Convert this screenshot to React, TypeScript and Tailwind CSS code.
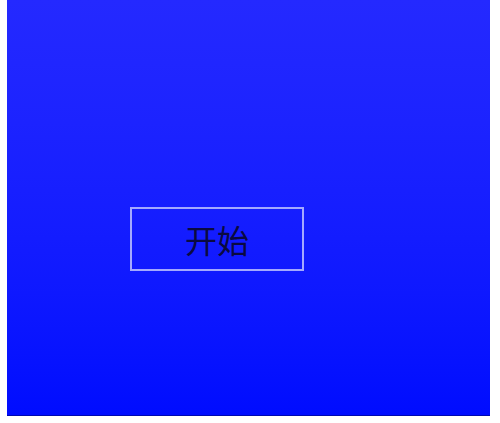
export default function App() {
  return (
    <div className="w-[500px] h-[423px] bg-white">
      <div className="ml-[7px] w-[483px] h-[416px] bg-gradient-to-b from-[#2429ff] to-[#000cff] border-b border-[#0008b0] pt-[207px] pl-[123px]">
        <button
          type="button"
          className="w-[174px] h-[64px] border-2 border-[#a4a9ff] flex items-center justify-center text-[32px] leading-none text-[#0a0a40] font-['Noto_Sans_CJK_SC',sans-serif]"
        >
          开始
        </button>
      </div>
    </div>
  );
}
